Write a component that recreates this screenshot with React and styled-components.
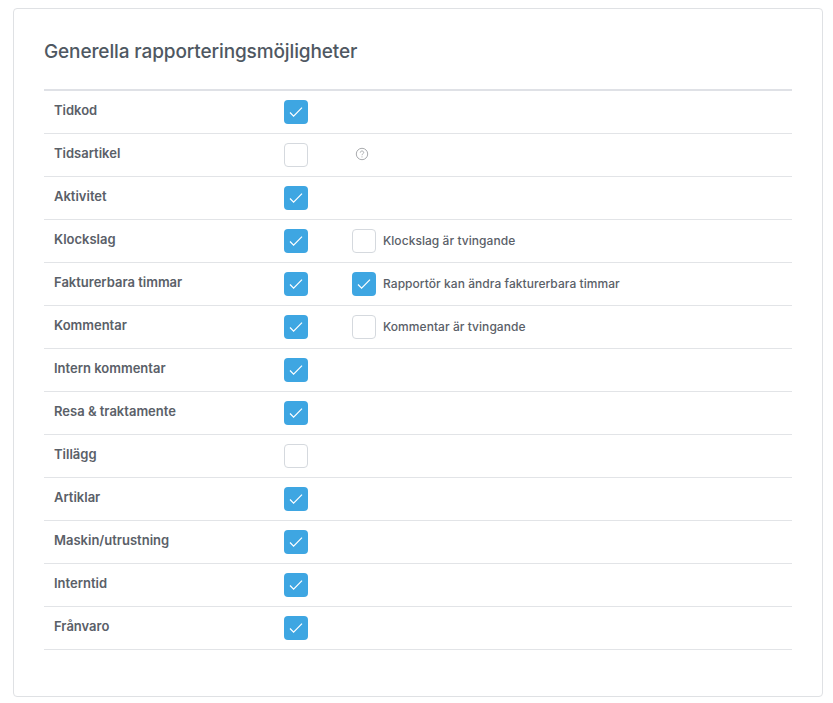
import React from 'react';
import styled, { createGlobalStyle } from 'styled-components';

const GlobalStyle = createGlobalStyle`
    body {
        margin: 0;
        background: #fff;
        font-family: Inter, "Noto Sans", sans-serif;
        color: #50565e;
    }
`;

const Page = styled.div`
    padding: 8px 10px 6px 13px;
`;

const Card = styled.section`
    box-sizing: border-box;
    width: 810px;
    height: 689px;
    padding: 29px 30px 0;
    background: #fff;
    border: 1px solid #dfe1e4;
    border-radius: 4px;
`;

const Title = styled.h2`
    margin: 0;
    height: 51px;
    font-size: 19px;
    line-height: 27px;
    font-weight: 500;
    letter-spacing: -0.12px;
    color: #4f5862;
`;

const List = styled.div`
    border-top: 2px solid #dfe1e6;
`;

const Row = styled.div`
    box-sizing: border-box;
    height: 43px;
    display: flex;
    align-items: center;
    border-bottom: 1px solid #e2e4e7;
`;

const Label = styled.div`
    width: 240px;
    padding-left: 10px;
    box-sizing: border-box;
    margin-top: -4px;
    font-size: 13px;
    font-weight: 600;
    color: #5a6068;
`;

const Box = styled.span`
    box-sizing: border-box;
    width: 24px;
    height: 24px;
    flex: none;
    display: flex;
    align-items: center;
    justify-content: center;
    border-radius: 4px;
    background: ${props => props.checked ? '#3ea6e2' : '#fff'};
    border: ${props => props.checked ? 'none' : '1px solid #d5d9de'};
`;

const Extra = styled.div`
    margin-left: 44px;
    display: flex;
    align-items: center;
    gap: 7px;
    font-size: 12px;
    font-weight: 500;
    letter-spacing: 0.05px;
    color: #5a6068;
`;

const ExtraText = styled.span`
    margin-top: -2px;
`;

const HelpWrap = styled.span`
    margin-left: 47px;
    margin-top: -2px;
    display: flex;
    color: #a9abae;
`;

const CheckIcon = styled.svg`
    margin-top: -1px;
`;

const Check = () => (
    <CheckIcon width="14" height="10" viewBox="0 0 14 10" fill="none">
        <path d="M1 5.5l3.6 3.6L13 .7" stroke="#fff" strokeWidth="1.2" />
    </CheckIcon>
);

const Help = () => (
    <svg width="14" height="14" viewBox="0 0 14 14" fill="none" stroke="currentColor">
        <circle cx="7" cy="7" r="5.7" strokeWidth="1" />
        <path d="M5.3 5.6c0-1 .8-1.6 1.7-1.6s1.7.6 1.7 1.5c0 1.3-1.7 1.3-1.7 2.7" strokeWidth="1" />
        <path d="M7 9.4v1" strokeWidth="1" />
    </svg>
);

const CheckBox = ({checked}) => <Box checked={checked}>{checked && <Check/>}</Box>;

const rows = [
    {label: 'Tidkod', checked: true},
    {label: 'Tidsartikel', checked: false, help: true},
    {label: 'Aktivitet', checked: true},
    {label: 'Klockslag', checked: true, extra: 'Klockslag är tvingande', extraChecked: false},
    {label: 'Fakturerbara timmar', checked: true, extra: 'Rapportör kan ändra fakturerbara timmar', extraChecked: true},
    {label: 'Kommentar', checked: true, extra: 'Kommentar är tvingande', extraChecked: false},
    {label: 'Intern kommentar', checked: true},
    {label: 'Resa & traktamente', checked: true},
    {label: 'Tillägg', checked: false},
    {label: 'Artiklar', checked: true},
    {label: 'Maskin/utrustning', checked: true},
    {label: 'Interntid', checked: true},
    {label: 'Frånvaro', checked: true},
];

const App = () => {
    return <Page>
        <GlobalStyle/>
        <Card>
            <Title>Generella rapporteringsmöjligheter</Title>
            <List>
                {rows.map(row => <Row key={row.label}>
                    <Label>{row.label}</Label>
                    <CheckBox checked={row.checked}/>
                    {row.help && <HelpWrap><Help/></HelpWrap>}
                    {row.extra && <Extra>
                        <CheckBox checked={row.extraChecked}/>
                        <ExtraText>{row.extra}</ExtraText>
                    </Extra>}
                </Row>)}
            </List>
        </Card>
    </Page>
}

export default App;
